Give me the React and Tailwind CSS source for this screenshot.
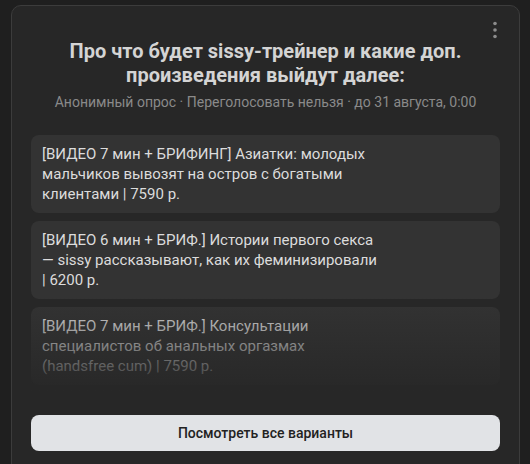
export default function App() {
  const options = [
    "[ВИДЕО 7 мин + БРИФИНГ] Азиатки: молодых мальчиков вывозят на остров с богатыми клиентами | 7590 р.",
    "[ВИДЕО 6 мин + БРИФ.] Истории первого секса — sissy рассказывают, как их феминизировали | 6200 р.",
    "[ВИДЕО 7 мин + БРИФ.] Консультации специалистов об анальных оргазмах (handsfree cum) | 7590 р.",
  ];
  return (
    <div
      className="h-[464px] overflow-hidden bg-[#1f1f1f] pt-[5px] pl-[11px] pr-[10px]"
      style={{ fontFamily: "Roboto, 'Noto Sans', sans-serif" }}
    >
      <div className="relative h-[520px] rounded-[10px] border border-[#3c3c3c] bg-[#272727] px-[19px] pt-[33px]">
        <button className="absolute right-[19px] top-[12px] flex h-[24px] w-[10px] items-center justify-center">
          <svg width="4" height="18" viewBox="0 0 4 18" fill="#8c8c8c">
            <circle cx="2" cy="2.5" r="1.8" />
            <circle cx="2" cy="9" r="1.8" />
            <circle cx="2" cy="15.5" r="1.8" />
          </svg>
        </button>
        <h2 className="px-[30px] text-center text-[20px] font-bold leading-[24px] text-[#d4d4d4]">
          Про что будет sissy-трейнер и какие доп. произведения выйдут далее:
        </h2>
        <p className="mt-[6px] text-center text-[14px] leading-[18px] text-[#8a8a8a]">
          Анонимный опрос · Переголосовать нельзя · до 31 августа, 0:00
        </p>
        <div className="relative mt-[24px] flex h-[262px] flex-col gap-2 overflow-hidden">
          {options.map((t, i) => (
            <div key={i} className="rounded-[8px] bg-[#333333] px-[11px] py-[9px]">
              <p className="max-w-[338px] text-[15px] leading-[20px] text-[#dcdcdc]">{t}</p>
            </div>
          ))}
          <div className="pointer-events-none absolute bottom-0 left-0 right-0 h-[100px] bg-gradient-to-b from-[#272727]/0 to-[#272727]" />
        </div>
        <button className="mt-[18px] flex h-[36px] w-full items-center justify-center rounded-[8px] bg-[#e1e3e6] text-[14px] font-medium text-[#222222]">
          Посмотреть все варианты
        </button>
      </div>
    </div>
  );
}
